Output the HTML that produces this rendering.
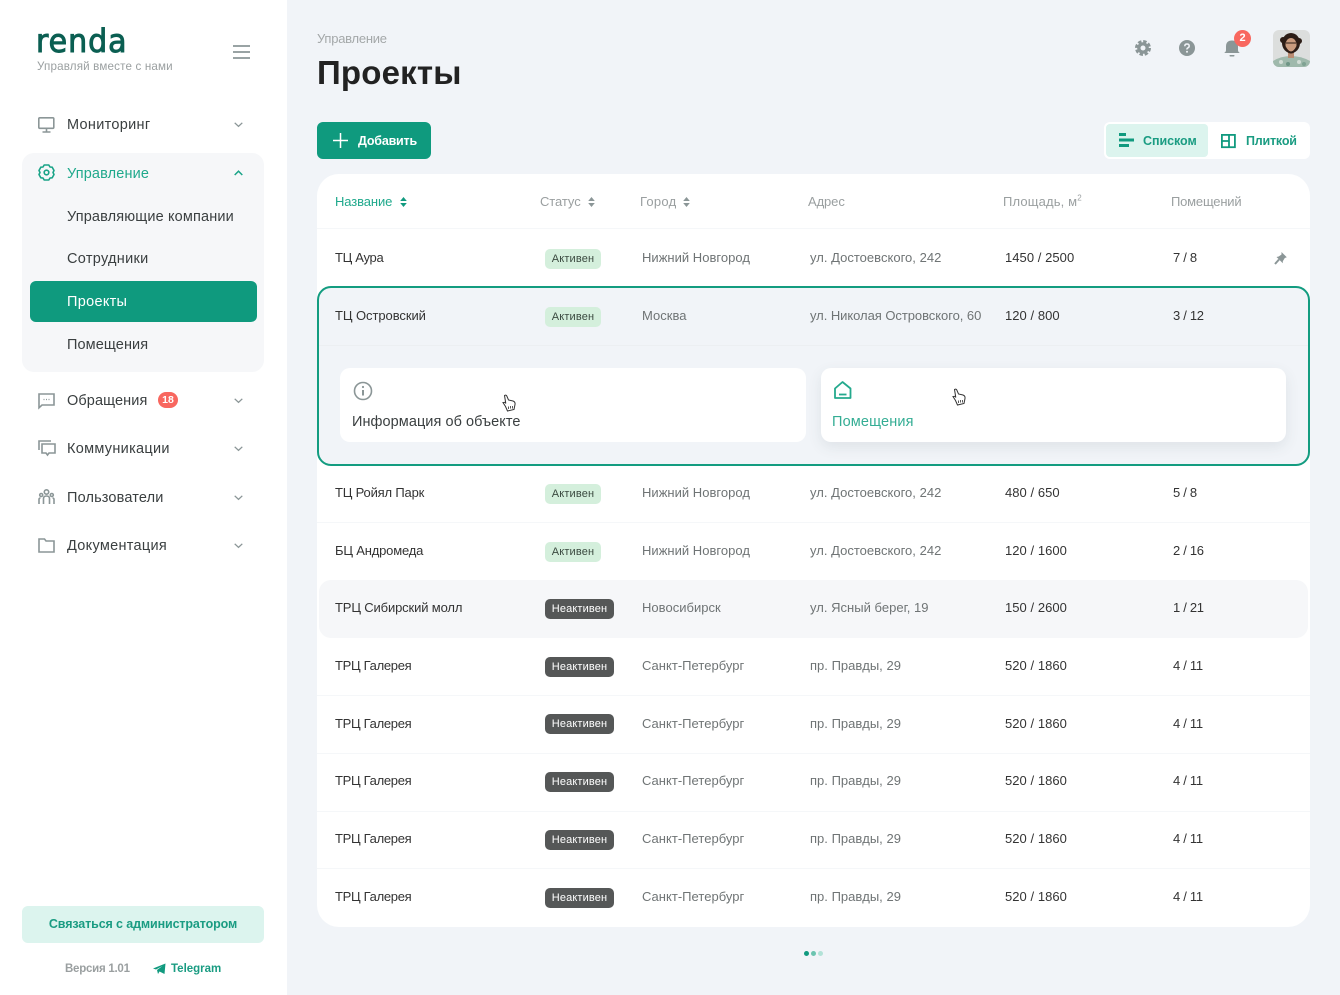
<!DOCTYPE html>
<html lang="ru"><head><meta charset="utf-8"><title>Проекты</title>
<style>
*{box-sizing:border-box;margin:0;padding:0}
html,body{width:1340px;height:995px;overflow:hidden;background:#f1f4f8;font-family:"Liberation Sans",sans-serif;color:#333}
.a{position:absolute;white-space:nowrap}
.box{position:absolute}
.t{position:absolute;white-space:nowrap;line-height:18px;height:18px;font-size:13px;color:#333;letter-spacing:.05px;margin-top:1px}
.n{font-size:14.5px;color:#3a3f40;letter-spacing:.15px;line-height:20px;height:20px}
.g{color:#6f7475;letter-spacing:.02px}
.h{color:#9a9fa0}
.k{letter-spacing:-.18px}
.l{letter-spacing:-.3px}
.s{position:absolute;height:20px;border-radius:5px;font-size:11px;line-height:21px;text-align:center;letter-spacing:.15px}
.on{background:#d4efdc;color:#3b4a40;width:56px;left:545px}
.off{background:#555757;color:#fff;width:69px;left:545px}
svg{position:absolute;overflow:visible}
.ic{fill:none;stroke:#8b9697;stroke-width:1.6}
.line{position:absolute;left:317px;width:993px;height:1px;background:#f5f7f9}
</style></head><body>
<div class="box" style="left:0;top:0;width:287px;height:995px;background:#fff"></div>
<div class="a" style="left:36px;top:17px;line-height:48px;letter-spacing:1px;color:#0b5f52;transform:scaleX(.94);transform-origin:left center;font-family:'DejaVu Sans','Liberation Sans',sans-serif;font-weight:normal;-webkit-text-stroke:1px #0b5f52;font-size:32px">renda</div>
<div class="t h" style="left:37px;top:57px;font-size:11.6px;letter-spacing:.17px;color:#9a9fa0">Управляй вместе с нами</div>
<svg style="left:233px;top:45px" width="18" height="14"><path d="M0 1H17M0 7H17M0 13H17" stroke="#8b9697" stroke-width="1.7"/></svg>

<div class="box" style="left:22px;top:153px;width:242px;height:219px;background:#f6f7f9;border-radius:12px"></div>
<div class="box" style="left:30px;top:281px;width:227px;height:41px;background:#0f9a7e;border-radius:6px"></div>

<svg class="ic" style="left:38px;top:117px" width="17" height="16"><rect x=".8" y=".8" width="15" height="10.5" rx="1"/><path d="M8.5 11.5V14.5M4.5 15H12.5"/></svg>
<div class="t n" style="left:67px;top:114px;letter-spacing:.3px">Мониторинг</div>
<svg class="ic" style="left:234px;top:122px;stroke-width:1.3" width="9" height="6"><path d="M.7 .8L4.5 4.4L8.3 .8"/></svg>

<svg style="left:38px;top:164px" width="17" height="17" fill="none" stroke="#1aa488" stroke-width="1.6" stroke-linejoin="round"><path d="M6.200 1H10.800L12 3L14.200 3.200L16 6.500L15 8.500L16 10.500L14.200 13.800L12 14L10.800 16H6.200L5 14L2.800 13.800L1 10.500L2 8.500L1 6.500L2.800 3.200L5 3Z"/><circle cx="8.500" cy="8.500" r="2.300"/></svg>
<div class="t n" style="left:67px;top:163px;color:#1fa98c">Управление</div>
<svg style="left:234px;top:170px" width="9" height="6" fill="none" stroke="#1aa488" stroke-width="1.5"><path d="M.7 5L4.5 1.2L8.3 5"/></svg>
<div class="t n" style="left:67px;top:206px">Управляющие компании</div>
<div class="t n" style="left:67px;top:248px;letter-spacing:.3px">Сотрудники</div>
<div class="t n" style="left:67px;top:291px;color:#fff;letter-spacing:.3px">Проекты</div>
<div class="t n" style="left:67px;top:334px;letter-spacing:.1px">Помещения</div>

<svg class="ic" style="left:38px;top:393px" width="17" height="16"><path d="M1 1H16V12H4L1 14.8Z"/><path d="M5.5 6.5H6.5M8 6.5H9M10.5 6.5H11.5" stroke-width="1.2"/></svg>
<div class="t n" style="left:67px;top:390px;letter-spacing:.1px">Обращения</div>
<div class="box" style="left:158px;top:392px;width:20px;height:16px;border-radius:8px;background:#f8675f;color:#fff;font-size:10.5px;line-height:16px;text-align:center;font-weight:bold">18</div>
<svg class="ic" style="left:234px;top:398px;stroke-width:1.3" width="9" height="6"><path d="M.7 .8L4.5 4.4L8.3 .8"/></svg>

<svg class="ic" style="left:38px;top:440px" width="18" height="17"><path d="M1 10V1H13"/><path d="M4 4H17V13H11L9.500 15L8 13H4Z"/></svg>
<div class="t n" style="left:67px;top:438px;letter-spacing:.3px">Коммуникации</div>
<svg class="ic" style="left:234px;top:446px;stroke-width:1.3" width="9" height="6"><path d="M.7 .8L4.5 4.4L8.3 .8"/></svg>

<svg class="ic" style="left:38px;top:489px" width="17" height="16"><circle cx="8.500" cy="3" r="2.200"/><circle cx="3.200" cy="6" r="1.500"/><circle cx="13.800" cy="6" r="1.500"/><path d="M5.500 15V9.500Q5.500 7 8.500 7T11.500 9.500V15M1 15V10.500Q1 9 2.500 9M16 15V10.500Q16 9 14.500 9"/></svg>
<div class="t n" style="left:67px;top:487px">Пользователи</div>
<svg class="ic" style="left:234px;top:495px;stroke-width:1.3" width="9" height="6"><path d="M.7 .8L4.5 4.4L8.300 .8"/></svg>

<svg class="ic" style="left:38px;top:538px" width="17" height="15"><path d="M1 1H6.500L8 3H16V14H1Z"/></svg>
<div class="t n" style="left:67px;top:535px;letter-spacing:.3px">Документация</div>
<svg class="ic" style="left:234px;top:543px;stroke-width:1.3" width="9" height="6"><path d="M.7 .8L4.500 4.400L8.300 .8"/></svg>

<div class="box" style="left:22px;top:906px;width:242px;height:37px;background:#dcf4ee;border-radius:6px;color:#1a9c82;font-size:12.500px;font-weight:bold;line-height:37px;text-align:center;letter-spacing:-.12px">Связаться с администратором</div>
<div class="t" style="left:65px;top:959px;font-size:11.500px;font-weight:bold;color:#9a9fa0;letter-spacing:-.25px">Версия 1.01</div>
<svg style="left:153px;top:963px" width="13" height="12"><path d="M0 5.500L12.500 .5L11.500 11L6.500 8.500L5 11L4 7L9.500 3L3 6.500Z" fill="#119a7f"/></svg>
<div class="t" style="left:171px;top:959px;font-size:11.500px;font-weight:bold;color:#1a9c82;letter-spacing:0">Telegram</div>

<div class="t" style="left:317px;top:29px;font-size:13px;color:#a4a8a9;letter-spacing:-.25px">Управление</div>
<div class="a" style="left:317px;top:52px;font-size:33px;font-weight:bold;line-height:42px;color:#222;letter-spacing:.2px">Проекты</div>

<div class="box" style="left:317px;top:122px;width:114px;height:37px;background:#0f9a7e;border-radius:6px"></div>
<svg style="left:333px;top:133px" width="15" height="15"><path d="M7.500 0V15M0 7.500H15" stroke="#fff" stroke-width="1.500"/></svg>
<div class="t" style="left:358px;top:131px;font-size:12.500px;font-weight:bold;color:#fff;letter-spacing:-.2px">Добавить</div>

<svg style="left:1135px;top:40px" width="16" height="16"><circle cx="8" cy="8" r="5.800" fill="#8b9697"/><circle cx="8" cy="8" r="6.600" fill="none" stroke="#8b9697" stroke-width="2.800" stroke-dasharray="3.400 1.783"/><circle cx="8" cy="8" r="2.500" fill="#f1f4f8"/></svg>
<svg style="left:1179px;top:40px" width="16" height="16"><circle cx="8" cy="8" r="8" fill="#8b9697"/><path d="M5.800 6.200Q5.800 4 8 4T10.200 6Q10.200 7.200 9 7.800T8 9.500" fill="none" stroke="#f1f4f8" stroke-width="1.500"/><circle cx="8" cy="11.800" r="1" fill="#f1f4f8"/></svg>
<svg style="left:1224px;top:40px" width="16" height="17"><path d="M0 13Q2 12 2 10V6.500Q2 .5 8 .5T14 6.500V10Q14 12 16 13Z" fill="#8b9697"/><rect x="5.500" y="15" width="5" height="1.500" rx=".7" fill="#8b9697"/></svg>
<div class="box" style="left:1234px;top:30px;width:17px;height:17px;border-radius:50%;background:#f8675f;color:#fff;font-size:11px;font-weight:bold;line-height:17px;text-align:center">2</div>
<svg style="left:1273px;top:30px" width="38" height="38"><defs><clipPath id="av"><rect width="37" height="37" rx="6"/></clipPath></defs><g clip-path="url(#av)"><rect width="37" height="37" fill="#dcdedd"/><path d="M0 37V31Q8 26 18 26T37 31V37Z" fill="#9fb9ac"/><circle cx="8" cy="32" r="2" fill="#d2ddd6"/><circle cx="15" cy="34" r="2" fill="#6f9586"/><circle cx="26" cy="32" r="2" fill="#d2ddd6"/><circle cx="31" cy="34" r="2" fill="#7fa293"/><rect x="15" y="21" width="6" height="7" fill="#b98c72"/><ellipse cx="18" cy="13" rx="9" ry="10" fill="#2c1d16"/><circle cx="10" cy="10" r="3" fill="#2c1d16"/><circle cx="26" cy="11" r="3" fill="#2c1d16"/><ellipse cx="18" cy="15" rx="5.500" ry="7" fill="#c99b7e"/><path d="M12.500 16Q18 27 23.500 16L23 21Q18 26 13 21Z" fill="#2c1d16"/><path d="M13 13H23" stroke="#2c1d16" stroke-width="1"/></g></svg>

<div class="box" style="left:1104px;top:122px;width:206px;height:37px;background:#fff;border-radius:6px"></div>
<div class="box" style="left:1106px;top:124px;width:102px;height:33px;background:#dcf4ee;border-radius:4px"></div>
<svg style="left:1119px;top:133px" width="15" height="14"><path d="M0 0H7V3H0ZM0 5.500H15V8.500H0ZM0 11H10V14H0Z" fill="#119a7f"/></svg>
<div class="t" style="left:1143px;top:131px;font-size:12.500px;font-weight:bold;color:#1a9c82;letter-spacing:-.05px">Списком</div>
<svg style="left:1221px;top:134px" width="15" height="14" fill="none" stroke="#119a7f" stroke-width="1.800"><rect x=".9" y=".9" width="13" height="12.300"/><path d="M8 1V13M1 7H8"/></svg>
<div class="t" style="left:1246px;top:131px;font-size:12.500px;font-weight:bold;color:#1a9c82;letter-spacing:-.2px">Плиткой</div>

<div class="box" style="left:317px;top:174px;width:993px;height:753px;background:#fff;border-radius:22px"></div>
<div class="line" style="top:228px"></div>
<div class="t" style="left:335px;top:192px;color:#1fa98c;letter-spacing:-.1px">Название</div>
<svg style="left:400px;top:197px" width="7" height="10"><path d="M3.500 0L6.800 4H.2ZM3.500 10L6.800 6H.2Z" fill="#119a7f"/></svg>
<div class="t h" style="left:540px;top:192px;letter-spacing:-.08px">Статус</div>
<svg style="left:588px;top:197px" width="7" height="10"><path d="M3.500 0L6.800 4H.2ZM3.500 10L6.800 6H.2Z" fill="#8b9697"/></svg>
<div class="t h" style="left:640px;top:192px;letter-spacing:.25px">Город</div>
<svg style="left:683px;top:197px" width="7" height="10"><path d="M3.500 0L6.800 4H.2ZM3.500 10L6.800 6H.2Z" fill="#8b9697"/></svg>
<div class="t h" style="left:808px;top:192px;letter-spacing:-.1px">Адрес</div>
<div class="t h" style="left:1003px;top:192px;letter-spacing:.15px">Площадь, м<sup style="font-size:8px;line-height:0">2</sup></div>
<div class="t h" style="left:1171px;top:192px;letter-spacing:-.2px">Помещений</div>

<div class="box" style="left:317px;top:286px;width:993px;height:180px;background:#f1f4f8;border:2px solid #139c80;border-radius:14px"></div>
<div class="line" style="top:345px;left:319px;width:989px;background:#eceff2"></div>
<div class="box" style="left:340px;top:368px;width:466px;height:74px;background:#fff;border-radius:10px"></div>
<div class="box" style="left:821px;top:368px;width:465px;height:74px;background:#fff;border-radius:10px;box-shadow:0 5px 14px rgba(60,80,90,.1)"></div>
<svg style="left:353px;top:381px" width="20" height="20" fill="none" stroke="#8b9697" stroke-width="1.600"><circle cx="10" cy="10" r="8.500"/><path d="M10 9V14.500" stroke-width="2"/><circle cx="10" cy="6" r="1.100" fill="#8b9697" stroke="none"/></svg>
<div class="t n" style="left:352px;top:411px;letter-spacing:.06px">Информация об объекте</div>
<svg style="left:834px;top:381px" width="18" height="18" fill="none" stroke="#24a98d" stroke-width="1.800"><path d="M1 7.500L8.500 1L16.500 7.500V17H1Z" stroke-linejoin="round"/><path d="M5 13.500H12.500"/></svg>
<div class="t n" style="left:832px;top:411px;color:#34ad94">Помещения</div>
<svg style="left:502px;top:394px" width="14" height="18" fill="#fff" stroke="#333" stroke-width="1"><path d="M2.500 1.500Q4 .5 4.800 2L6.500 6L11 7Q13.500 8 13 10.500L12 15.500L5.500 17L3.500 12.500L1 8.500L3.200 8.300L3.800 9.500Z"/><path d="M6.500 12.500V15M8.500 12V14.500M10.500 12V14.500" stroke-width=".8"/></svg>
<svg style="left:952px;top:388px" width="14" height="18" fill="#fff" stroke="#333" stroke-width="1"><path d="M2.500 1.500Q4 .5 4.800 2L6.500 6L11 7Q13.500 8 13 10.500L12 15.500L5.500 17L3.500 12.500L1 8.500L3.200 8.300L3.800 9.500Z"/><path d="M6.500 12.500V15M8.500 12V14.500M10.500 12V14.500" stroke-width=".8"/></svg>

<div class="box" style="left:319px;top:580px;width:989px;height:58px;background:#f6f7f9;border-radius:12px"></div>
<div class="line" style="top:522px"></div><div class="line" style="top:695px"></div><div class="line" style="top:753px"></div><div class="line" style="top:811px"></div><div class="line" style="top:868px"></div>

<div class="t l" style="left:335px;top:248px">ТЦ Аура</div><div class="s on" style="top:249px">Активен</div><div class="t g" style="left:642px;top:248px">Нижний Новгород</div><div class="t g" style="left:810px;top:248px">ул. Достоевского, 242</div><div class="t" style="left:1005px;top:248px">1450 / 2500</div><div class="t l" style="left:1173px;top:248px">7 / 8</div>
<svg style="left:1274px;top:251px" width="13" height="14"><path d="M7.500 1L12.800 6.300L10.800 7L8.800 10.300L8.800 12.300L2.500 6L4.700 5.500L7.500 3.500Z" fill="#8b9697"/><path d="M5 8.500L1 13" stroke="#8b9697" stroke-width="2"/></svg>

<div class="t" style="left:335px;top:306px;letter-spacing:-.06px">ТЦ Островский</div><div class="s on" style="top:307px">Активен</div><div class="t g" style="left:642px;top:306px">Москва</div><div class="t g" style="left:810px;top:306px;letter-spacing:-.05px">ул. Николая Островского, 60</div><div class="t" style="left:1005px;top:306px">120 / 800</div><div class="t l" style="left:1173px;top:306px">3 / 12</div>

<div class="t k" style="left:335px;top:483px">ТЦ Ройял Парк</div><div class="s on" style="top:484px">Активен</div><div class="t g" style="left:642px;top:483px">Нижний Новгород</div><div class="t g" style="left:810px;top:483px">ул. Достоевского, 242</div><div class="t" style="left:1005px;top:483px">480 / 650</div><div class="t l" style="left:1173px;top:483px">5 / 8</div>

<div class="t k" style="left:335px;top:541px">БЦ Андромеда</div><div class="s on" style="top:542px">Активен</div><div class="t g" style="left:642px;top:541px">Нижний Новгород</div><div class="t g" style="left:810px;top:541px">ул. Достоевского, 242</div><div class="t" style="left:1005px;top:541px">120 / 1600</div><div class="t l" style="left:1173px;top:541px">2 / 16</div>

<div class="t" style="left:335px;top:598px;letter-spacing:-.14px">ТРЦ Сибирский молл</div><div class="s off" style="top:599px">Неактивен</div><div class="t g" style="left:642px;top:598px">Новосибирск</div><div class="t g" style="left:810px;top:598px">ул. Ясный берег, 19</div><div class="t" style="left:1005px;top:598px">150 / 2600</div><div class="t l" style="left:1173px;top:598px">1 / 21</div>

<div class="t l" style="left:335px;top:656px">ТРЦ Галерея</div><div class="s off" style="top:657px">Неактивен</div><div class="t g" style="left:642px;top:656px">Санкт-Петербург</div><div class="t g" style="left:810px;top:656px">пр. Правды, 29</div><div class="t" style="left:1005px;top:656px">520 / 1860</div><div class="t l" style="left:1173px;top:656px">4 / 11</div>

<div class="t l" style="left:335px;top:714px">ТРЦ Галерея</div><div class="s off" style="top:714px">Неактивен</div><div class="t g" style="left:642px;top:714px">Санкт-Петербург</div><div class="t g" style="left:810px;top:714px">пр. Правды, 29</div><div class="t" style="left:1005px;top:714px">520 / 1860</div><div class="t l" style="left:1173px;top:714px">4 / 11</div>

<div class="t l" style="left:335px;top:771px">ТРЦ Галерея</div><div class="s off" style="top:772px">Неактивен</div><div class="t g" style="left:642px;top:771px">Санкт-Петербург</div><div class="t g" style="left:810px;top:771px">пр. Правды, 29</div><div class="t" style="left:1005px;top:771px">520 / 1860</div><div class="t l" style="left:1173px;top:771px">4 / 11</div>

<div class="t l" style="left:335px;top:829px">ТРЦ Галерея</div><div class="s off" style="top:830px">Неактивен</div><div class="t g" style="left:642px;top:829px">Санкт-Петербург</div><div class="t g" style="left:810px;top:829px">пр. Правды, 29</div><div class="t" style="left:1005px;top:829px">520 / 1860</div><div class="t l" style="left:1173px;top:829px">4 / 11</div>

<div class="t l" style="left:335px;top:887px">ТРЦ Галерея</div><div class="s off" style="top:888px">Неактивен</div><div class="t g" style="left:642px;top:887px">Санкт-Петербург</div><div class="t g" style="left:810px;top:887px">пр. Правды, 29</div><div class="t" style="left:1005px;top:887px">520 / 1860</div><div class="t l" style="left:1173px;top:887px">4 / 11</div>

<div class="box" style="left:804px;top:951px;width:5px;height:5px;border-radius:50%;background:#119a7f"></div>
<div class="box" style="left:811px;top:951px;width:5px;height:5px;border-radius:50%;background:#6cc4b0"></div>
<div class="box" style="left:818px;top:951px;width:5px;height:5px;border-radius:50%;background:#b2e2d7"></div>
</body></html>
